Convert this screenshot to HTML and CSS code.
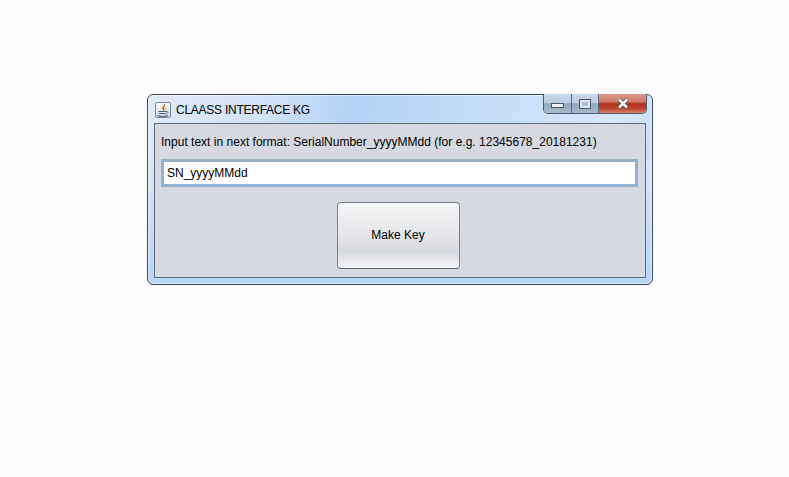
FILE: index.html
```html
<!DOCTYPE html>
<html lang="en">
<head>
  <meta charset="UTF-8">
  <title>CLAASS INTERFACE KG</title>
  <link rel="stylesheet" href="styles.css">
</head>
<body>
  <div class="window">
    <div class="titlebar">
      <div class="app-icon">
        <svg width="13" height="14" viewBox="0 0 13 14">
          <path d="M7.500 0C8.500 2 4 3.500 5.500 6.500C6 7.500 6.500 7.500 6.500 8C8 6.500 6 5.500 7.500 3.500C8.500 2.500 8.500 1.500 7.500 0Z" fill="#e0640f"/>
          <path d="M8.500 4.500C7.500 5.500 8 6.500 8 7.500" fill="none" stroke="#e0640f" stroke-width="0.800"/>
          <path d="M1.500 8.500H9M2 10.500H8.500M0.500 12.500C3 13.800 8.500 13.800 11 12.500" fill="none" stroke="#3f6285" stroke-width="1.100"/>
          <path d="M9 8.500C11.500 8 11.500 10.500 8.500 11" fill="none" stroke="#3f6285" stroke-width="0.900"/>
        </svg>
      </div>
      <span class="title">CLAASS INTERFACE KG</span>
      <div class="controls">
        <div class="ctl ctl-min"><span class="min-glyph"></span></div>
        <div class="ctl ctl-max"><span class="max-glyph"></span></div>
        <div class="ctl ctl-close">
          <svg width="14" height="11" viewBox="0 0 14 11">
            <path d="M3 1.500L11 9.500M11 1.500L3 9.500" fill="none" stroke="#4a4a4a" stroke-width="4"/>
            <path d="M3 1.500L11 9.500M11 1.500L3 9.500" fill="none" stroke="#f2f2f2" stroke-width="2.600"/>
          </svg>
        </div>
      </div>
    </div>
    <div class="panel">
      <div class="prompt">Input text in next format: SerialNumber_yyyyMMdd (for e.g. 12345678_20181231)</div>
      <input class="field" type="text" value="SN_yyyyMMdd">
      <div class="actions">
        <button class="make-key" type="button">Make Key</button>
      </div>
    </div>
  </div>
</body>
</html>
```

FILE: styles.css
```css
* {
  margin: 0;
  padding: 0;
  box-sizing: border-box;
}

html, body {
  height: 100%;
}

body {
  background-color: #fcfcfc;
  font-family: "Liberation Sans", Arial, sans-serif;
  font-size: 12px;
  color: #000;
  padding: 94px 0 0 147px;
  overflow: hidden;
}

.window {
  width: 506px;
  height: 191px;
  padding: 0 6px 6px;
  border: 1px solid #3d4650;
  border-radius: 6px;
  background: linear-gradient(#0000 0, #0000 62px, #d6e7f8 68px, #b7d6f6 100%),
    linear-gradient(100deg, #dfeaf6 0%, #d2e3f6 22%, #b3d2f5 38%, #c0daf6 58%, #d8e8fa 88%, #c2dbf4 100%);
  box-shadow: inset 0 0 0 1px rgba(255, 255, 255, 0.5);
  display: flex;
  flex-direction: column;
}

.titlebar {
  height: 28px;
  flex: none;
  display: flex;
  align-items: center;
  position: relative;
}

.app-icon {
  width: 16px;
  height: 16px;
  margin: 2px 5px 0 1px;
  border: 1px solid #7d8a99;
  border-radius: 2px;
  background: linear-gradient(#fafafa, #cfd7e1);
  display: flex;
  align-items: center;
  justify-content: center;
}

.title {
  font-size: 12px;
  letter-spacing: -0.25px;
  margin-top: 2px;
}

.controls {
  position: absolute;
  top: -1px;
  right: -1px;
  height: 20px;
  display: flex;
  border: 1px solid #4f5a66;
  border-top: none;
  border-radius: 0 0 5px 5px;
  overflow: hidden;
}

.ctl {
  height: 100%;
  display: flex;
  align-items: center;
  justify-content: center;
}

.ctl-min, .ctl-max {
  background: linear-gradient(#c9d9e9 0%, #bccde0 45%, #94a8bd 52%, #a6bbd0 100%);
  border-right: 1px solid #5d6a78;
}

.ctl-min {
  width: 28px;
  align-items: flex-end;
  padding-bottom: 5px;
}

.ctl-max {
  width: 27px;
}

.min-glyph {
  width: 13px;
  height: 5px;
  background: #eef2f6;
  border: 1px solid #4c5866;
}

.max-glyph {
  width: 12px;
  height: 10px;
  border: 1px solid #4c5866;
  background: #a9bfd5;
  box-shadow: inset 0 0 0 2px #dde6ee;
}

.ctl-close {
  width: 47px;
  background: linear-gradient(#d99a8b 0%, #cf7b69 40%, #b0301b 52%, #c24a35 80%, #d98470 100%);
}

.panel {
  flex: 1;
  background: #d6d9e1;
  border: 1px solid #5f6b76;
  padding: 11px 0 0 6px;
  display: flex;
  flex-direction: column;
}

.prompt {
  line-height: 14px;
  height: 14px;
  font-size: 12px;
  letter-spacing: 0.01px;
}

.field {
  width: 477px;
  height: 28px;
  margin: 10px 0 0;
  padding: 0 3px;
  font-family: inherit;
  font-size: 12px;
  color: #000;
  background: #fff;
  border: 3px solid #8fb3d6;
  border-top-color: #9aaec2;
  outline: none;
}

.actions {
  width: 477px;
  display: flex;
  justify-content: center;
  margin-top: 15px;
  padding-right: 3px;
}

.make-key {
  width: 123px;
  height: 67px;
  padding-bottom: 2px;
  font-family: inherit;
  font-size: 12px;
  color: #000;
  border: 1px solid #7d8087;
  border-bottom-color: #5d6066;
  border-radius: 4px;
  background: linear-gradient(#f5f6f8 0%, #e6e7ea 45%, #d8dae1 75%, #f4f5fa 100%);
}
```
